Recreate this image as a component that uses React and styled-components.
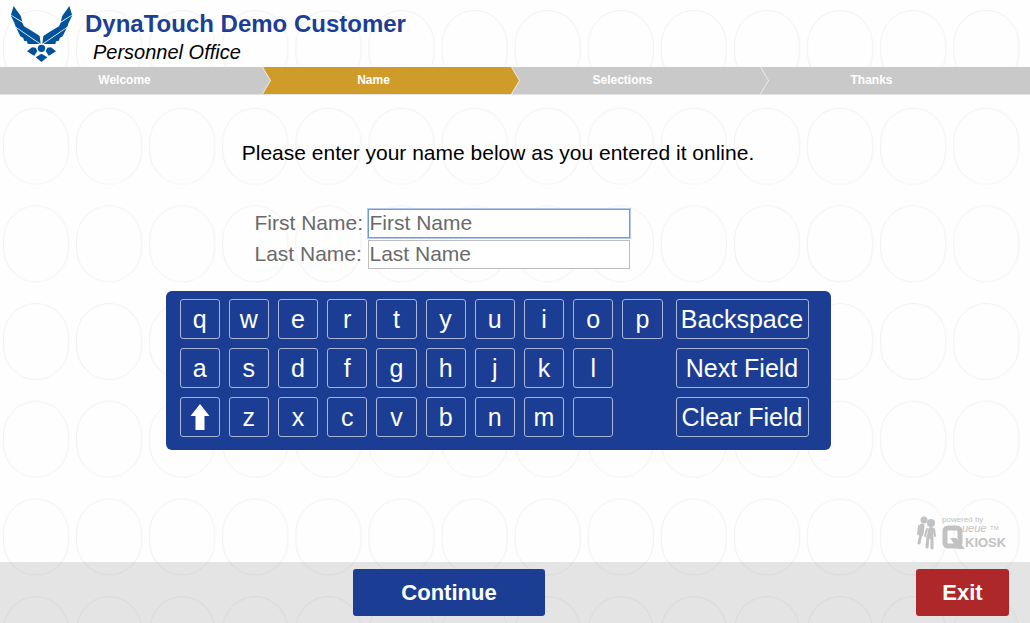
import React, { useState } from "react";
import styled, { createGlobalStyle } from "styled-components";

const GlobalStyle = createGlobalStyle`
  * {
    box-sizing: border-box;
  }
  body {
    margin: 0;
    background: #fefefe;
    font-family: "Liberation Sans", Arial, sans-serif;
    color: #000;
  }
  button, input {
    font-family: inherit;
  }
`;

const Page = styled.div`
  position: relative;
  isolation: isolate;
  min-height: 100vh;
  display: flex;
  flex-direction: column;
`;

const Backdrop = styled.svg`
  position: absolute;
  inset: 0;
  z-index: -1;
  width: 100%;
  height: 100%;
`;

const Header = styled.header`
  height: 67px;
  padding: 6px 10px 0;
  display: flex;
  gap: 12px;
`;

const Emblem = styled.svg`
  width: 63px;
  height: 56px;
  flex: none;
`;

const Title = styled.h1`
  margin: 4px 0 0;
  font-size: 24px;
  line-height: 28px;
  font-weight: 700;
  color: #1d3e94;
`;

const Office = styled.p`
  margin: 2px 0 0 8px;
  font-size: 20px;
  line-height: 24px;
  font-style: italic;
`;

const Steps = styled.ol`
  position: relative;
  z-index: 0;
  list-style: none;
  margin: 0;
  padding: 0 34px 0 0;
  height: 28px;
  display: flex;
  overflow: hidden;
  background: #ececec;
  border-bottom: 1px solid #e4e4e4;
`;

const Step = styled.li`
  position: relative;
  flex: 1;
  text-align: center;
  font-size: 12px;
  line-height: 27px;
  font-weight: 700;
  color: #fff;

  &::before {
    content: "";
    position: absolute;
    z-index: -1;
    top: 0;
    bottom: 0;
    left: 14px;
    right: -21px;
    background: ${({ $current }) => ($current ? "#cf9c2a" : "#c9c9c9")};
    clip-path: polygon(
      0 0,
      calc(100% - 8px) 0,
      100% 50%,
      calc(100% - 8px) 100%,
      0 100%,
      8px 50%
    );
  }
  &:first-child::before {
    left: -8px;
  }
  &:last-child::before {
    right: -42px;
  }
`;

const Main = styled.main`
  flex: 1;
  display: flex;
  flex-direction: column;
  align-items: center;
  padding: 45px 34px 0 0;
`;

const Prompt = styled.p`
  margin: 0 0 44px;
  font-size: 21px;
  line-height: 25px;
`;

const Entry = styled.form`
  display: flex;
  flex-direction: column;
  gap: 22px;
`;

const Fields = styled.div`
  display: grid;
  grid-template-columns: 108px 262px;
  gap: 2px 5px;
  padding-left: 89px;
  color: #6a6a6a;
`;

const Label = styled.label`
  font-size: 21px;
  line-height: 28px;
  white-space: nowrap;
`;

const Field = styled.input`
  width: 100%;
  height: 29px;
  padding: 0 1px 1px;
  border: 1px solid ${({ $active }) => ($active ? "#7499d6" : "#bdbdbd")};
  box-shadow: ${({ $active }) => ($active ? "0 0 0 1px #b5caee" : "none")};
  border-radius: 0;
  outline: none;
  background: #fff;
  font-size: 21px;
  color: #333;

  &::placeholder {
    color: #6a6a6a;
    opacity: 1;
  }
`;

const Keyboard = styled.div`
  display: grid;
  grid-template-columns: 483px 133px;
  gap: 13px;
  padding: 8px 22px 13px 14px;
  border-radius: 6px;
  background: #1c3d94;
`;

const Keys = styled.div`
  display: grid;
  grid-template-columns: repeat(${({ $cols }) => $cols}, 1fr);
  grid-auto-rows: 40px;
  gap: 9px;
`;

const Key = styled.button`
  grid-column: ${({ $col }) => $col || "auto"};
  display: flex;
  align-items: center;
  justify-content: center;
  padding: 0;
  border: 1px solid #a9b6d8;
  border-radius: 3px;
  background: transparent;
  color: #fff;
  font-size: 25px;
  white-space: nowrap;
  cursor: pointer;
`;

const Powered = styled.svg`
  align-self: flex-end;
  margin: auto -14px 10px 0;
  width: 95px;
  height: 38px;
`;

const Footer = styled.footer`
  height: 61px;
  padding: 0 21px 1px 0;
  display: flex;
  align-items: center;
  gap: 18px;
  background: rgba(0, 0, 0, 0.1);
`;

const FooterCenter = styled.div`
  flex: 1;
  display: flex;
  justify-content: center;
`;

const ActionButton = styled.button`
  width: ${({ $wide }) => ($wide ? "192px" : "93px")};
  height: 47px;
  padding: 2px 0 0;
  border: 0;
  border-radius: 3px;
  background: ${({ $danger }) => ($danger ? "#ae2829" : "#1c3d94")};
  color: #fff;
  font-size: 22px;
  font-weight: 700;
  cursor: pointer;
`;

const STEPS = ["Welcome", "Name", "Selections", "Thanks"];
const ROWS = [
  ["q", "w", "e", "r", "t", "y", "u", "i", "o", "p"],
  ["a", "s", "d", "f", "g", "h", "j", "k", "l"],
  ["shift", "z", "x", "c", "v", "b", "n", "m", " "],
];

const Wings = () => (
  <Emblem viewBox="31 18 189 168" fill="#00529b" aria-label="Air Force emblem">
    <g id="wing">
      <path d="M42 18 L53 34 L63 47 L68 65 L34 44 Z" />
      <path d="M33 46 L68 68 L73 79 L98 94 L120 108 L123 131 L48 80 L44 68 Z" />
      <path d="M50 84 L120 132 L84 132 L82 124 L73 122 L71 114 L62 109 Z" />
      <path d="M108 143 L113 153 L104 167 L96 163 L82 154 L97 142 Z" />
    </g>
    <use href="#wing" transform="matrix(-1 0 0 1 251 0)" />
    <circle cx="125.500" cy="145" r="11" />
    <path d="M125.500 161 L143 172 L125.500 186 L108 172 Z" />
  </Emblem>
);

const QueueKiosk = () => (
  <Powered viewBox="0 0 95 38" fill="#c2c2c2" aria-label="powered by Queue Kiosk">
    <g stroke="#c2c2c2" strokeLinecap="round" strokeLinejoin="round" fill="none">
      <circle cx="9" cy="6" r="3.500" fill="#c2c2c2" stroke="none" />
      <path d="M7 12 L6 20" strokeWidth="5" />
      <path d="M4 12 L3 20" strokeWidth="2" />
      <path d="M6 20 L4 29" strokeWidth="3" />
      <circle cx="16" cy="9" r="4" fill="#c2c2c2" stroke="none" />
      <path d="M16 16 L15 22" strokeWidth="6" />
      <path d="M12 15 L10 22 M19 15 L20 22" strokeWidth="2" />
      <path d="M13 22 L12 33 M17 23 L17 34" strokeWidth="3" />
    </g>
    <text x="27" y="8" fontSize="8">powered by</text>
    <rect x="30" y="14" width="15" height="18" rx="3" fill="none" stroke="#c2c2c2" strokeWidth="5" />
    <path d="M35 24 L41 24 L50 35 L43 35 Z" />
    <text x="47" y="18" fontSize="11" fontStyle="italic">ueue</text>
    <text x="75" y="16" fontSize="6">TM</text>
    <text x="50" y="33" fontSize="13" fontWeight="700">KIOSK</text>
  </Powered>
);

const ShiftIcon = () => (
  <svg width="20" height="28" viewBox="0 0 20 28" fill="#fff" aria-hidden="true">
    <path d="M10 1 L19.500 13 H14.500 V27 H5.500 V13 H0.500 Z" />
  </svg>
);

const App = () => {
  const [names, setNames] = useState({ first: "", last: "" });
  const [active, setActive] = useState("first");
  const [shift, setShift] = useState(false);

  const update = (field, value) => setNames({ ...names, [field]: value });

  const press = (key) => {
    if (key === "shift") {
      setShift(!shift);
      return;
    }
    update(active, names[active] + (shift ? key.toUpperCase() : key));
    setShift(false);
  };

  return (
    <Page>
      <GlobalStyle />
      <Backdrop aria-hidden="true">
        <defs>
          <pattern id="ovals" y="10" width="73.1" height="97.7" patternUnits="userSpaceOnUse">
            <rect x="3.500" y="0.500" width="65" height="76" rx="32.500" ry="34" fill="none" stroke="#f1f1f1" />
          </pattern>
        </defs>
        <rect y="10" width="1023" height="100%" fill="url(#ovals)" />
      </Backdrop>
      <Header>
        <Wings />
        <div>
          <Title>DynaTouch Demo Customer</Title>
          <Office>Personnel Office</Office>
        </div>
      </Header>
      <nav aria-label="Progress">
        <Steps>
          {STEPS.map((step) => (
            <Step key={step} $current={step === "Name"}>
              {step}
            </Step>
          ))}
        </Steps>
      </nav>
      <Main>
        <Prompt>Please enter your name below as you entered it online.</Prompt>
        <Entry onSubmit={(e) => e.preventDefault()}>
          <Fields>
            <Label htmlFor="first">First Name:</Label>
            <Field
              id="first"
              placeholder="First Name"
              value={names.first}
              $active={active === "first"}
              onFocus={() => setActive("first")}
              onChange={(e) => update("first", e.target.value)}
            />
            <Label htmlFor="last">Last Name:</Label>
            <Field
              id="last"
              placeholder="Last Name"
              value={names.last}
              $active={active === "last"}
              onFocus={() => setActive("last")}
              onChange={(e) => update("last", e.target.value)}
            />
          </Fields>
          <Keyboard>
            <Keys $cols={10}>
              {ROWS.map((row) =>
                row.map((key, i) => (
                  <Key
                    key={key}
                    type="button"
                    $col={i + 1}
                    aria-label={key === " " ? "space" : key}
                    onClick={() => press(key)}
                  >
                    {key === "shift" ? <ShiftIcon /> : shift ? key.toUpperCase() : key}
                  </Key>
                ))
              )}
            </Keys>
            <Keys $cols={1}>
              <Key type="button" onClick={() => update(active, names[active].slice(0, -1))}>
                Backspace
              </Key>
              <Key type="button" onClick={() => setActive(active === "first" ? "last" : "first")}>
                Next Field
              </Key>
              <Key type="button" onClick={() => update(active, "")}>
                Clear Field
              </Key>
            </Keys>
          </Keyboard>
        </Entry>
        <QueueKiosk />
      </Main>
      <Footer>
        <FooterCenter>
          <ActionButton type="button" $wide>
            Continue
          </ActionButton>
        </FooterCenter>
        <ActionButton type="button" $danger>
          Exit
        </ActionButton>
      </Footer>
    </Page>
  );
};

export default App;
